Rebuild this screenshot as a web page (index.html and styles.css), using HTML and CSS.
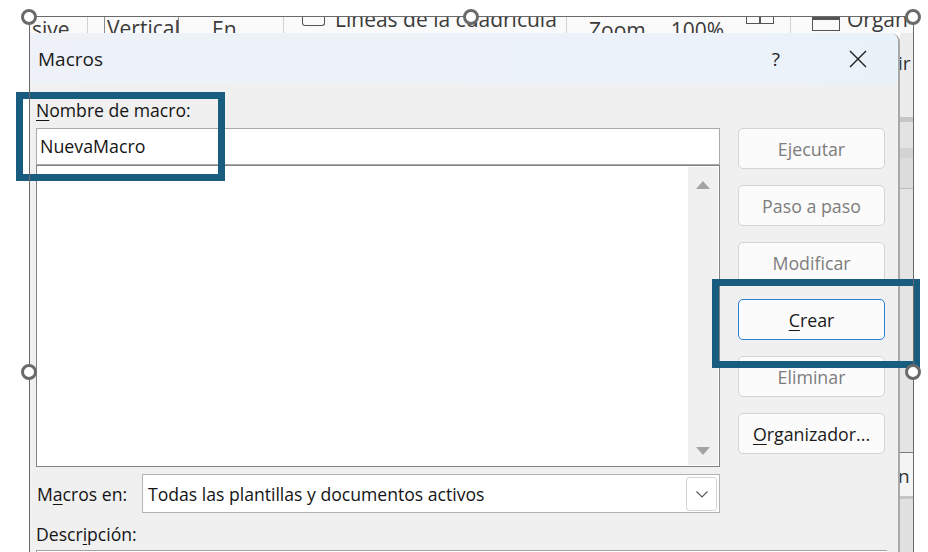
FILE: index.html
```html
<!DOCTYPE html>
<html lang="es">
<head>
<meta charset="utf-8">
<title>Macros</title>
<link rel="stylesheet" href="styles.css">
</head>
<body>
<div class="canvas">
  <div class="frame">
    <div class="ribbon">
      <div class="rc rc1"><span class="rt t-sive">sive</span></div>
      <div class="rc rc2"><span class="rt t-vertical">Vertical</span></div>
      <div class="rc rc3"><span class="rt t-en">En</span></div>
      <div class="rc rc4"><span class="rb-check"></span><span class="rt t-lineas">Líneas de la cuadrícula</span></div>
      <div class="rc rc5"><span class="rt t-zoom">Zoom</span><span class="rt t-pct">100%</span><span class="rb-pages"><i></i><i></i></span></div>
      <div class="rc rc6"><span class="rb-win"></span><span class="rt t-organ">Organ</span></div>
    </div>
    <div class="stage">
      <div class="dialog">
        <div class="titlebar">
          <span class="title">Macros</span>
          <span class="help">?</span>
          <svg class="close" width="18" height="18" viewBox="0 0 18 18"><path d="M1 1L17 17M17 1L1 17" stroke="#1f1f1f" stroke-width="1.4" fill="none"/></svg>
        </div>
        <div class="body">
          <div class="main">
            <div class="left">
              <div class="label"><u>N</u>ombre de macro:</div>
              <div class="namebox">NuevaMacro</div>
              <div class="list">
                <div class="scroll"><span class="arr up"></span><span class="arr down"></span></div>
              </div>
              <div class="inrow">
                <span class="label">M<u>a</u>cros en:</span>
                <div class="combo">
                  <span class="combo-text">Todas las plantillas y documentos activos</span>
                  <span class="combo-btn"><svg width="12" height="7" viewBox="0 0 12 7"><path d="M0.5 0.5L6 6L11.5 0.5" stroke="#555" stroke-width="1.1" fill="none"/></svg></span>
                </div>
              </div>
            </div>
            <div class="right">
              <div class="btn dis">Ejecutar</div>
              <div class="btn dis">Paso a paso</div>
              <div class="btn dis">Modificar</div>
              <div class="btn def"><u>C</u>rear</div>
              <div class="btn dis">Eliminar</div>
              <div class="btn"><u>O</u>rganizador...</div>
            </div>
          </div>
          <div class="label desc-label">Descr<u>i</u>pción:</div>
          <div class="descbox"></div>
        </div>
      </div>
      <div class="side">
        <div class="sg s1"><span class="st">ir</span></div>
        <div class="sg s2"></div>
        <div class="sg s3"></div>
        <div class="sg s4"></div>
        <div class="sg s5"></div>
        <div class="sg s6"></div>
        <div class="sg s7"></div>
        <div class="sg s8"></div>
        <div class="sg s9"><span class="st">n</span></div>
        <div class="sg s10"></div>
        <div class="sg s11"></div>
      </div>
    </div>
  </div>

  <div class="mark mark-name"></div>
  <div class="mark mark-create"></div>
  <div class="selection"></div>
  <span class="handle h1"></span>
  <span class="handle h2"></span>
  <span class="handle h3"></span>
  <span class="handle h4"></span>
  <span class="handle h5"></span>
</div>
</body>
</html>
```

FILE: styles.css
```css
* { box-sizing: border-box; margin: 0; padding: 0; }
html, body { width: 928px; height: 552px; overflow: hidden; background: #fff; }
body { font-family: "Open Sans", "Noto Sans", "Liberation Sans", sans-serif; color: #1a1a1a; }
u { text-decoration-thickness: 1px; text-underline-offset: 3px; }

.canvas { position: relative; width: 928px; height: 552px; overflow: hidden; background: #fff; padding: 17px 0 0 30px; }
.frame { width: 883px; height: 560px; display: flex; flex-direction: column; }

/* ribbon fragment behind dialog */
.ribbon { height: 16px; flex: none; display: flex; overflow: hidden; background: #fafafa; font-size: 21px; color: #3a3a3a; white-space: nowrap; }
.rc { flex: none; height: 16px; display: flex; align-items: flex-start; }
.rt { display: block; line-height: 21px; }
.rc1 { width: 58px; border-right: 1px solid #d2d2d2; padding-left: 2px; }
.rc2 { width: 75px; margin-left: 16px; border-left: 1px solid #8c8c8c; border-right: 1px solid #8c8c8c; padding-left: 2px; }
.rc3 { width: 105px; padding-left: 33px; border-right: 1px solid #d2d2d2; }
.rc4 { width: 283px; padding-left: 18px; border-right: 1px solid #d2d2d2; }
.rc5 { width: 224px; padding-left: 22px; border-right: 1px solid #d2d2d2; }
.rc6 { flex: 1; padding-left: 21px; }
.t-sive { margin-top: 2px; }
.t-vertical { margin-top: 1px; }
.t-en { margin-top: 2px; }
.t-lineas { margin-top: -8px; margin-left: 10px; }
.t-zoom { margin-top: 3px; }
.t-pct { margin-top: 3px; margin-left: 25px; }
.t-organ { margin-top: -8px; margin-left: 7px; }
.rb-check { width: 23px; height: 9px; border: 1.5px solid #555; border-top: none; border-radius: 0 0 3px 3px; }
.rb-pages { width: 28px; height: 7px; margin-left: 22px; border: 1.5px solid #555; border-top: none; display: flex; justify-content: center; }
.rb-pages i { display: block; width: 1.5px; height: 100%; background: #555; }
.rb-pages i + i { display: none; }
.rb-win { width: 28px; height: 14px; border: 1.5px solid #555; border-top: 3px solid #555; }

.stage { flex: 1; display: flex; }

/* dialog */
.dialog { width: 870px; flex: none; display: flex; flex-direction: column; background: #f0f0f0; border-right: 2px solid #a8a8a8; border-top-right-radius: 9px; overflow: hidden; }
.titlebar { height: 51px; flex: none; display: flex; align-items: center; padding: 0 31px 0 8px; background: linear-gradient(90deg, #eef2f8, #eaf2f9); }
.title { flex: 1; font-size: 19px; color: #1a1a1a; }
.help { font-size: 19px; margin-right: 69px; color: #1f1f1f; }
.close { display: block; }

.body { flex: 1; padding: 15px 11px 0 6px; }
.main { display: flex; gap: 18px; }
.left { width: 684px; flex: none; }
.label { font-size: 17.6px; line-height: 22px; color: #141414; }
.namebox { margin-top: 7px; height: 37px; border: 1px solid #aaaaaa; background: #fff; font-size: 17.8px; line-height: 35px; padding-left: 3px; color: #141414; }
.list { height: 302px; border: 1px solid #838383; background: #fff; display: flex; justify-content: flex-end; padding: 1px; }
.scroll { width: 30px; background: #f0f0f0; display: flex; flex-direction: column; justify-content: space-between; align-items: center; padding: 14px 0 10px; }
.arr { width: 0; height: 0; border-left: 7px solid transparent; border-right: 7px solid transparent; }
.arr.up { border-bottom: 8px solid #a4a4a4; }
.arr.down { border-top: 8px solid #a4a4a4; }
.inrow { margin-top: 7px; height: 39px; display: flex; align-items: center; justify-content: space-between; padding-left: 1px; }
.combo { width: 578px; height: 39px; border: 1px solid #b3b3b3; background: #fff; display: flex; align-items: center; justify-content: space-between; padding: 2px 2px 1px 5px; }
.combo-text { font-size: 17.6px; color: #141414; }
.combo-btn { width: 31px; height: 34px; border: 1px solid #d4d4d4; border-radius: 3px; background: #fff; display: flex; align-items: center; justify-content: center; }

.right { width: 147px; flex: none; padding-top: 29px; display: flex; flex-direction: column; gap: 16px; }
.btn { height: 41px; border: 1px solid #d3d3d3; border-radius: 5px; background: #fbfbfb; font-size: 17.8px; line-height: 39px; padding-top: 1px; text-align: center; color: #1a1a1a; }
.btn.dis { color: #7d7d7d; }
.btn.def { border-color: #2a7fd4; }

.desc-label { margin-top: 10px; }
.descbox { margin-top: 5px; height: 30px; border-top: 1px solid #a3a3a3; border-left: 1px solid #a3a3a3; background: #fff; }

/* strip of the document visible to the right of the dialog */
.side { flex: 1; display: flex; flex-direction: column; overflow: hidden; }
.sg { flex: none; }
.st { display: block; font-size: 19px; line-height: 20px; color: #333; }
.s1 { height: 84px; background: #ececec; padding-top: 20px; margin-left: -2px; }
.s2 { height: 5px; background: #c6c6c6; }
.s3 { height: 26px; background: #e3e3e3; }
.s4 { height: 10px; background: #d3d3d3; }
.s5 { height: 30px; background: #dcdcdc; }
.s6 { height: 1px; background: #bdbdbd; }
.s7 { height: 263px; background: #e4e4e4; }
.s8 { height: 1px; background: #7c7c7c; }
.s9 { height: 43px; background: #f4f4f4; padding-top: 13px; margin-left: -2px; }
.s10 { height: 3px; background: #c6c6c6; }
.s11 { flex: 1; background: #e1e1e1; }

/* overlays: annotation frames, image selection outline and handles */
.mark { position: absolute; border: 7px solid #185c7f; }
.mark-name { left: 16px; top: 92px; width: 209px; height: 89px; }
.mark-create { left: 712px; top: 279px; width: 208px; height: 89px; }
.selection { position: absolute; left: 29px; top: 16px; width: 885px; height: 600px; border: 1px solid #6a6a6a; border-bottom: none; }
.handle { position: absolute; width: 16px; height: 16px; border: 3px solid #6a6a6a; border-radius: 50%; background: #fff; }
.h1 { left: 21px; top: 9px; }
.h2 { left: 463px; top: 9px; }
.h3 { left: 905px; top: 9px; }
.h4 { left: 21px; top: 364px; }
.h5 { left: 905px; top: 364px; }
```
